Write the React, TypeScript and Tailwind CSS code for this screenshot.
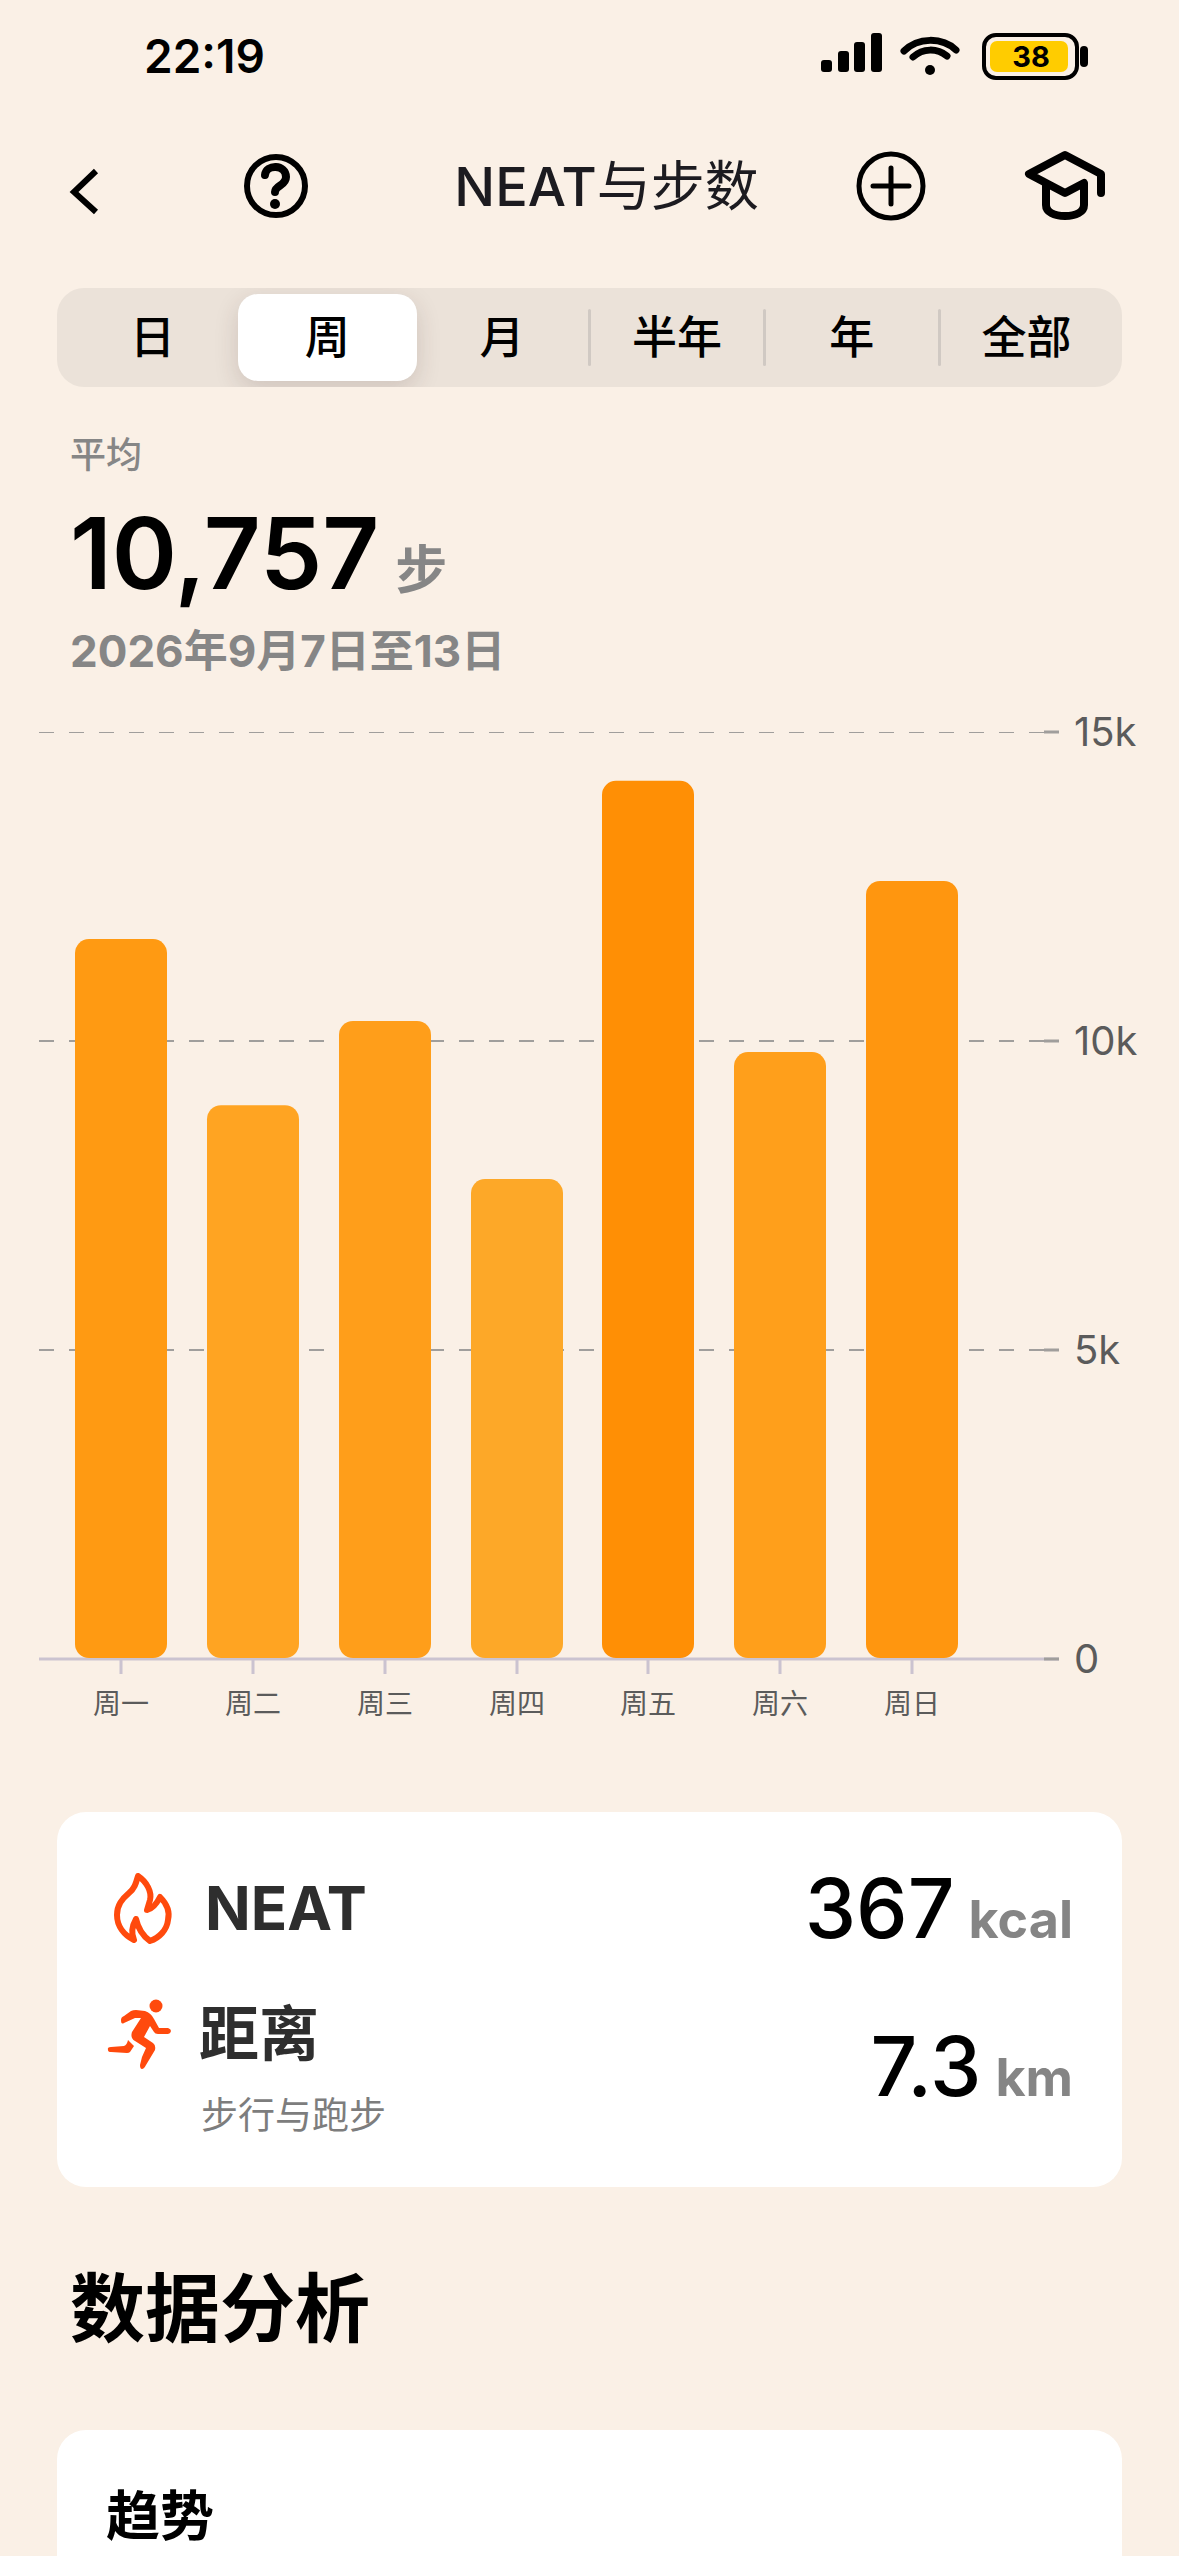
import { useState } from "react";

const ranges = ["日", "周", "月", "半年", "年", "全部"];

const days = [
  { label: "周一", steps: 11650, color: "#ff9a12" },
  { label: "周二", steps: 8960, color: "#ffa422" },
  { label: "周三", steps: 10325, color: "#ff9e1a" },
  { label: "周四", steps: 7765, color: "#fda828" },
  { label: "周五", steps: 14210, color: "#ff8f05" },
  { label: "周六", steps: 9820, color: "#ff9f1b" },
  { label: "周日", steps: 12590, color: "#ff960f" },
];

function StatusBar() {
  return (
    <div className="flex items-center justify-between pt-[31px] pl-[144px] pr-[91px]">
      <span className="text-[46px] leading-[50px] font-semibold">22:19</span>
      <div className="flex items-center gap-[18px]">
        <svg width="61" height="48" viewBox="0 0 61 48">
          <rect x="0" y="28" width="11" height="12" rx="3" />
          <rect x="17" y="19" width="11" height="21" rx="3" />
          <rect x="33" y="10" width="11" height="30" rx="3" />
          <rect x="50" y="1" width="11" height="39" rx="3" />
        </svg>
        <svg width="60" height="48" viewBox="0 0 60 48" fill="none" stroke="#000" strokeWidth="7" strokeLinecap="round">
          <path d="M4 19C18 5 42 5 56 18" />
          <path d="M13 25C23 16 37 16 47 24" />
          <circle cx="30" cy="38" r="5" fill="#000" stroke="none" />
        </svg>
        <div className="ml-1 flex items-center">
          <div className="flex h-[47px] w-[97px] items-center rounded-[14px] border-4 border-black px-1">
            <div className="flex h-[31px] w-[78px] items-center justify-center rounded-[7px] bg-[#ffcc00] pl-1 text-[29px] leading-none font-bold">38</div>
          </div>
          <div className="ml-px h-[21px] w-2 rounded-[4px] bg-black" />
        </div>
      </div>
    </div>
  );
}

function Header() {
  return (
    <header className="flex items-center pt-[64px] pl-[69px] pr-[72px]">
      <button aria-label="返回">
        <svg width="32" height="82" viewBox="0 0 32 82" fill="none" stroke="#000" strokeWidth="6">
          <path d="M27 26L5 47L27 67" />
        </svg>
      </button>
      <button aria-label="帮助" className="ml-[142px]">
        <svg width="66" height="72" viewBox="0 0 66 72" fill="none" stroke="#000" strokeLinecap="round">
          <circle cx="33" cy="36" r="29" strokeWidth="6" />
          <path d="M22 25C23 14 43 14 43 27C43 36 32 35 32 42" strokeWidth="8" />
          <circle cx="32" cy="54" r="5" fill="#000" stroke="none" />
        </svg>
      </button>
      <h1 className="flex-1 pt-[2px] pl-12 text-center text-[54px] leading-[72px] font-medium text-[#1c1b20]">
        NEAT<span className="font-normal">与步数</span>
      </h1>
      <button aria-label="添加">
        <svg width="70" height="72" viewBox="0 0 70 72" fill="none" stroke="#000" strokeWidth="5" strokeLinecap="round">
          <circle cx="35" cy="36" r="32" />
          <path d="M35 18V54M17 36H53" />
        </svg>
      </button>
      <button aria-label="课程" className="ml-[97px]">
        <svg width="84" height="72" viewBox="0 0 84 72" fill="none" stroke="#000" strokeWidth="8" strokeLinecap="round" strokeLinejoin="round">
          <path d="M78 43V24L42 5L6 24L42 43L61 33V55C61 62 53 66 42 66C31 66 23 62 23 55V34" />
        </svg>
      </button>
    </header>
  );
}

function RangeTabs() {
  const [active, setActive] = useState(1);
  return (
    <div role="tablist" className="mx-[57px] mt-[61px] flex h-[99px] items-center overflow-hidden rounded-[27px] bg-[#ebe2d9] px-2">
      {ranges.map((range, i) => (
        <div key={range} className="relative flex flex-1 items-center">
          {i > 0 && i !== active && i !== active + 1 && (
            <span className="absolute -left-px h-[57px] w-[3px] rounded-full bg-[#d0c9c3]" />
          )}
          <button
            role="tab"
            aria-selected={i === active}
            onClick={() => setActive(i)}
            className={`h-[87px] flex-1 text-[45px] leading-none font-[450] ${
              i === active ? "-mx-[2px] rounded-[20px] bg-white shadow-[0_8px_24px_rgba(60,40,40,0.16)]" : ""
            }`}
          >
            {range}
          </button>
        </div>
      ))}
    </div>
  );
}

function Chart() {
  const zero = 967;
  const scale = 309 / 5000;
  return (
    <svg viewBox="0 0 1179 1048" className="block w-full" role="img" aria-label="每日步数">
      {[15, 10, 5].map((k) => {
        const y = zero - k * 1000 * scale;
        return (
          <g key={k}>
            <line x1="39" x2="1044" y1={k === 15 ? y + 0.5 : y} y2={k === 15 ? y + 0.5 : y} stroke="#a09e9c" strokeWidth={k === 15 ? 1 : 2} strokeDasharray="15 15" />
            <line x1="1044" x2="1059" y1={y} y2={y} stroke="#a09e9c" strokeWidth="3" />
            <text x="1074" y={y + 14} fontSize="40" fill="#5b5b5b">{k}k</text>
          </g>
        );
      })}
      <line x1="39" x2="1059" y1={zero} y2={zero} stroke="#cbc3d0" strokeWidth="3" />
      <line x1="1044" x2="1059" y1={zero} y2={zero} stroke="#a09e9c" strokeWidth="3" />
      <text x="1074" y={zero + 14} fontSize="40" fill="#5b5b5b">0</text>
      {days.map((day, i) => {
        const center = 121 + Math.round((i * 791) / 6);
        const height = day.steps * scale;
        return (
          <g key={day.label}>
            <line x1={center} x2={center} y1={zero + 1} y2={zero + 15} stroke="#cbc3d0" strokeWidth="3" />
            <rect x={center - 46} y={zero - height} width="92" height={height - 1} rx="14" fill={day.color} />
            <text x={center} y={zero + 55} textAnchor="middle" fontSize="28" fill="#5b5b5b">{day.label}</text>
          </g>
        );
      })}
    </svg>
  );
}

function Summary() {
  return (
    <section className="mx-[57px] mt-[72px] flex h-[375px] justify-between rounded-[29px] bg-white pr-[49px] pl-[50px]">
      <div className="flex flex-col pt-[56px]">
        <div className="flex items-center">
          <svg width="68" height="80" viewBox="0 0 68 80" fill="none" stroke="#ff4a0d" strokeWidth="6" strokeLinejoin="round">
            <path d="M31 8C40 14 45 24 43 32L40 42C46 41 50 35 53 29C60 36 63 44 61 52C60 62 52 70 43 73C36 68 31 60 29 51C25 58 24 65 27 72C17 67 10 58 10 47C10 37 15 31 22 25C28 20 29 15 31 8Z" />
          </svg>
          <h2 className="ml-[30px] text-[60px] leading-[80px] font-bold text-[#2e2e2e]">NEAT</h2>
        </div>
        <div className="mt-[48px] flex items-center">
          <svg width="68" height="76" viewBox="0 0 68 76" fill="#ff4a0d">
            <circle cx="49" cy="10" r="6.5" />
            <path d="M14 24Q14 21 17 20L24 15Q26 14 29 14L38 15Q44 17 47 23L52 32H61Q64 33 64 35Q64 37 61 38H51Q48 38 47 36L43 30L37 41L46 47Q49 49 48 54L39 69Q37 73 35 73Q33 73 33 69L35 61L39 52L28 45Q23 42 25 36L34 22H28L17 27Q14 29 14 24Z" />
            <path d="M1 54Q0 51 4 51L17 50Q20 49 21 44L27 50L23 56Q22 57 20 57L4 56Q1 56 1 54Z" />
          </svg>
          <h2 className="ml-[24px] text-[60px] leading-[76px] font-bold text-[#2e2e2e]">距离</h2>
        </div>
        <p className="mt-[19px] ml-[94px] text-[37px] leading-[50px] text-[#7d7d7d]">步行与跑步</p>
      </div>
      <div className="flex flex-col items-end gap-[62px] pt-[49px]">
        <Value amount="367" unit="kcal" />
        <Value amount="7.3" unit="km" />
      </div>
    </section>
  );
}

function Value({ amount, unit }: { amount: string; unit: string }) {
  return (
    <div className="flex items-baseline gap-[14px]">
      <span className="text-[82px] leading-[96px] font-medium">{amount}</span>
      <span className="text-[52px] leading-none font-bold text-[#858585]">{unit}</span>
    </div>
  );
}

export default function App() {
  return (
    <main className="flex min-h-screen flex-col bg-[#faf0e6] font-[Inter,'Noto_Sans_CJK_SC',sans-serif] text-black">
      <StatusBar />
      <Header />
      <RangeTabs />
      <section className="px-[70px] pt-[43px] text-[#868686]">
        <p className="text-[36px] leading-[50px] font-medium">平均</p>
        <div className="mt-[14px] flex items-baseline gap-[16px]">
          <span className="text-[99px] leading-[118px] font-semibold text-black">10,757</span>
          <span className="text-[52px] leading-none font-bold">步</span>
        </div>
        <p className="mt-[11px] text-[44px] leading-[56px] font-bold">2026年9月7日至13日</p>
      </section>
      <div className="mt-[13px]">
        <Chart />
      </div>
      <Summary />
      <h2 className="mt-[70px] ml-[70px] text-[75px] leading-[104px] font-bold">数据分析</h2>
      <section className="mx-[57px] mt-[69px] flex-1 rounded-t-[29px] bg-white px-[49px] pt-[47px]">
        <h3 className="text-[54px] leading-[80px] font-bold">趋势</h3>
      </section>
    </main>
  );
}
